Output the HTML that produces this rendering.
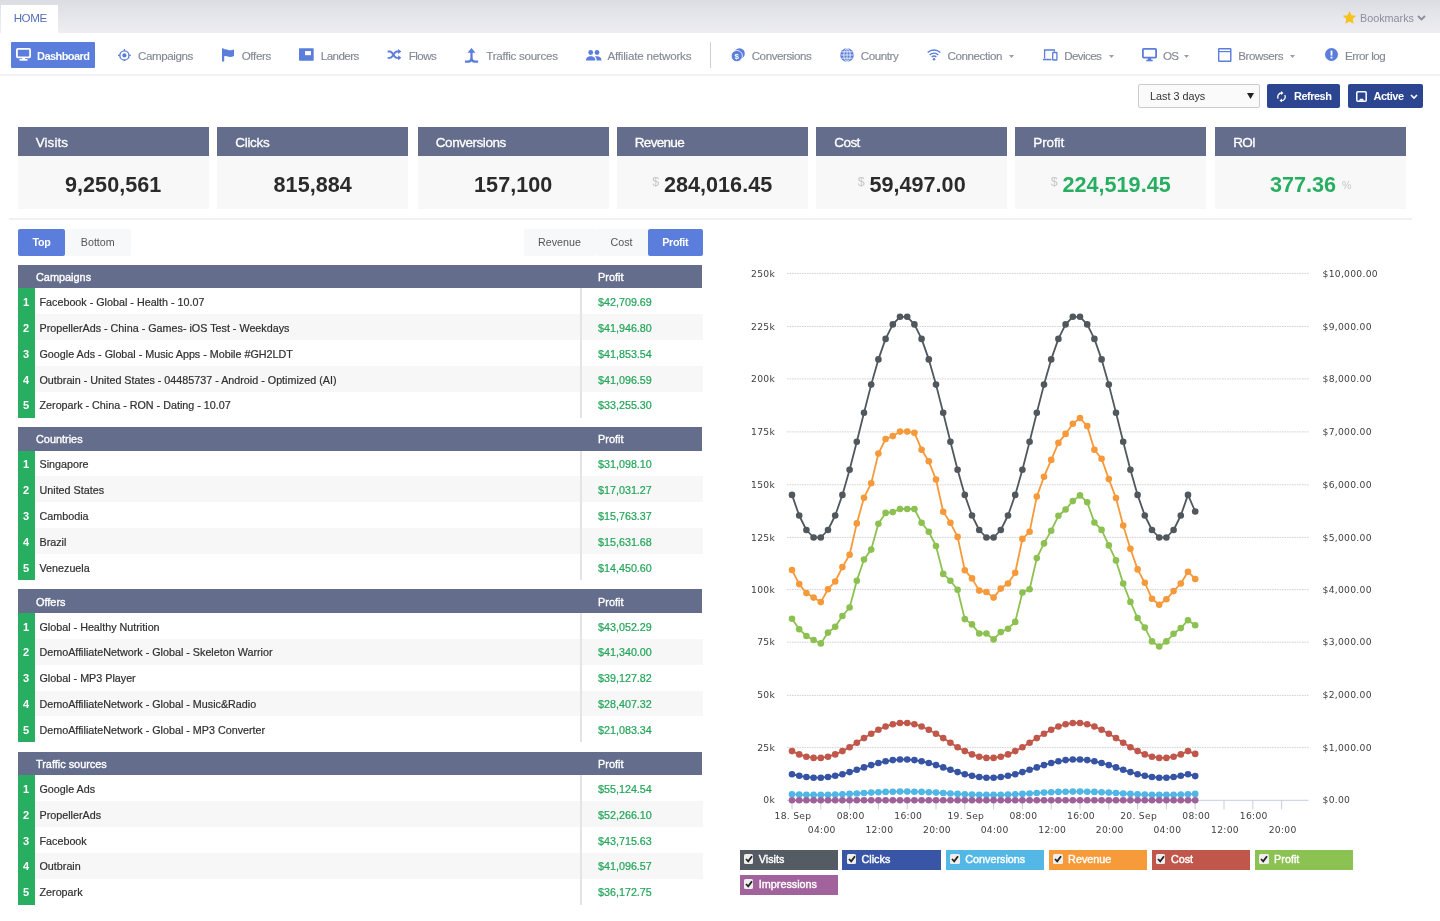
<!DOCTYPE html>
<html lang="en"><head><meta charset="utf-8"><title>Dashboard</title><style>
*{box-sizing:border-box;margin:0;padding:0}
html,body{width:1440px;height:921px;overflow:hidden;background:#fff}
body{font-family:"Liberation Sans",Arial,sans-serif;position:relative;color:#333;filter:blur(0.5px)}
.a{position:absolute;white-space:nowrap}
.t{position:absolute;white-space:nowrap;line-height:1;transform:translateY(-50%)}
.topbar{left:0;top:0;width:1440px;height:32.5px;background:linear-gradient(#dcdde3,#eeeef2)}
.tab{left:1px;top:5px;width:57px;height:28px;background:#fff}
.nav{left:0;top:32.5px;width:1440px;height:43px;background:#fff;border-bottom:2px solid #f1f2f5}
.navt{font-size:11.6px;color:#858995;-webkit-text-stroke:0.15px #858995}
.ico{position:absolute}
.card-h{position:absolute;background:#646d8b;top:127px;height:29px}
.card-b{position:absolute;background:#f8f8f9;top:156px;height:53px}
.card-t{font-size:13.5px;color:#fff;-webkit-text-stroke:0.3px #fff}
.card-n{font-size:21.6px;font-weight:700;color:#2b2b2b;top:184.5px;text-align:center;transform:translate(-50%,-50%)}
.unit{font-size:12.5px;color:#c6c6c6;font-weight:400}
.btn{position:absolute;font-size:11px;text-align:center}
.th{position:absolute;left:17.6px;width:684.9px;height:23.7px;background:#646d8b}
.tht{font-size:10.9px;color:#fff;-webkit-text-stroke:0.35px #fff}
.row{position:absolute;left:34px;width:668.5px;height:25.88px}
.row.alt{background:#f7f7f7}
.idx{position:absolute;left:17.6px;width:17px;height:26px;background:#27ae60}
.idxt{font-size:11px;font-weight:700;color:#fff;left:26.4px;transform:translate(-50%,-50%)}
.rt{font-size:10.75px;color:#303030;left:39.5px;-webkit-text-stroke:0.2px #303030}
.rv{font-size:10.75px;color:#22a558;left:598.5px;-webkit-text-stroke:0.2px #22a558}
.vline{position:absolute;left:580px;width:2px;background:#e4e4e4}
.lg{position:absolute;width:98.5px;height:20px}
.lgt{font-size:10.8px;color:#fff;-webkit-text-stroke:0.4px #fff}
.cb{position:absolute;width:9.5px;height:9.5px;background:#eee;border-radius:1.5px}
.idxt{z-index:2}</style></head><body>
<div class="a topbar"></div>
<div class="a tab"></div>
<div class="t " style="left:13.7px;top:17.8px;font-size:11.6px;letter-spacing:-0.45px;color:#5570b8">HOME</div>
<svg class="ico" style="left:1341.5px;top:10px" width="15" height="15" viewBox="0 0 24 24"><path fill="#f6c21c" d="M12 1.5l3.2 6.9 7.5.9-5.5 5.2 1.4 7.5L12 18.3 5.4 22l1.4-7.5L1.3 9.3l7.5-.9z"/></svg>
<div class="t " style="left:1360px;top:17.9px;font-size:10.8px;color:#8b8f9b">Bookmarks</div>
<svg class="ico" style="left:1416.5px;top:14px" width="9" height="8" viewBox="0 0 9 8"><path d="M1 2l3.5 3.5L8 2" fill="none" stroke="#8b8f9b" stroke-width="1.8"/></svg>
<div class="a nav"></div>
<div class="a" style="left:11px;top:42px;width:84px;height:26px;background:#5b7ddb;border-radius:1px"></div>
<div class="t " style="left:37px;top:55.8px;font-size:11px;color:#fff;font-weight:700;letter-spacing:-0.55px">Dashboard</div>
<svg class="ico" style="left:16px;top:48px" width="15" height="13" viewBox="0 0 15 13"><rect x="0.9" y="0.9" width="13.2" height="8.4" rx="1" fill="none" stroke="#fff" stroke-width="1.8"/><rect x="6" y="9.5" width="3" height="1.6" fill="#fff"/><rect x="3.5" y="11" width="8" height="1.7" fill="#fff"/></svg>
<svg class="ico" style="left:118.2px;top:48.6px" width="12.8" height="12.8" viewBox="0 0 14 14"><circle cx="7" cy="7" r="5" fill="none" stroke="#5b7ddb" stroke-width="1.5"/><circle cx="7" cy="7" r="2.3" fill="#5b7ddb"/><path d="M7 0v1.8M7 12.2V14M0 7h1.8M12.2 7H14" stroke="#5b7ddb" stroke-width="1.4"/></svg>
<div class="t navt" style="left:138px;top:55.8px;letter-spacing:-0.406px;">Campaigns</div>
<svg class="ico" style="left:221px;top:48px" width="14" height="14" viewBox="0 0 14 14"><path fill="#5b7ddb" d="M1 0.5h2.2v13H1z"/><path fill="#5b7ddb" d="M3 1.5c2.5-1 4 .8 6 .8 1.5 0 2.7-.5 4-.9v6.6c-1.3.5-2.5.9-4 .9-2 0-3.500-1.700-6-.7z"/></svg>
<div class="t navt" style="left:241.7px;top:55.8px;letter-spacing:-0.343px;">Offers</div>
<svg class="ico" style="left:299.3px;top:48px" width="14.7" height="13" viewBox="0 0 15 13"><rect x="0" y="0" width="15" height="13" rx="0.8" fill="#5b7ddb"/><rect x="6.200" y="3" width="6" height="4.200" fill="#fff"/></svg>
<div class="t navt" style="left:320.8px;top:55.8px;letter-spacing:-0.572px;">Landers</div>
<svg class="ico" style="left:386.8px;top:49.1px" width="15" height="11.4" viewBox="0 0 15 12.5"><path d="M0 2.800h2.600c3 0 4.400 6.900 7.400 6.900h2.500M0 9.700h2.600c3 0 4.400-6.900 7.400-6.900h2.500" fill="none" stroke="#5b7ddb" stroke-width="2.100"/><path fill="#5b7ddb" d="M11.500 0l3.500 2.800-3.500 2.800zM11.500 6.900l3.500 2.800-3.500 2.800z"/></svg>
<div class="t navt" style="left:408.7px;top:55.8px;letter-spacing:-0.536px;">Flows</div>
<svg class="ico" style="left:464.3px;top:47.6px" width="15" height="15" viewBox="0 0 16 16"><path d="M8 3v8.500M1 14.500h3.300c2.200 0 3.700-1.500 3.700-3.800 0 2.300 1.500 3.800 3.700 3.800h3.300" fill="none" stroke="#5b7ddb" stroke-width="2.400"/><path fill="#5b7ddb" d="M8 0l4.300 5H3.700z"/></svg>
<div class="t navt" style="left:486.3px;top:55.8px;letter-spacing:-0.266px;">Traffic sources</div>
<svg class="ico" style="left:586px;top:50px" width="15.5" height="11" viewBox="0 0 15.5 11"><circle cx="4.700" cy="2.500" r="2.400" fill="#5b7ddb"/><circle cx="11" cy="2.500" r="2.400" fill="#5b7ddb"/><path fill="#5b7ddb" d="M0 10.500c0-3 2.300-4.300 4.700-4.300s4.700 1.300 4.700 4.300zM10.600 10.500c0-1.800-.6-3-1.600-3.900.6-.3 1.300-.4 2-.4 2.400 0 4.500 1.300 4.500 4.300z"/></svg>
<div class="t navt" style="left:607.5px;top:55.8px;letter-spacing:-0.202px;">Affiliate networks</div>
<div class="a" style="left:710.3px;top:42px;width:1.2px;height:26px;background:#d0d0d0"></div>
<svg class="ico" style="left:731px;top:48px" width="14" height="14" viewBox="0 0 14 14"><circle cx="8.500" cy="5.500" r="5.300" fill="#5b7ddb"/><circle cx="5.800" cy="8" r="5.600" fill="#5b7ddb" stroke="#fff" stroke-width="0.800"/><text x="5.800" y="11" font-size="8" font-weight="700" fill="#fff" text-anchor="middle" font-family="Liberation Sans,sans-serif">$</text></svg>
<div class="t navt" style="left:751.7px;top:55.8px;letter-spacing:-0.441px;">Conversions</div>
<svg class="ico" style="left:839.5px;top:48px" width="14" height="14" viewBox="0 0 14 14"><circle cx="7" cy="7" r="6.800" fill="#5b7ddb"/><path d="M7 0.500v13M0.500 7h13M1.500 3.800h11M1.500 10.200h11" stroke="#fff" stroke-width="0.900" fill="none" opacity="0.85"/><ellipse cx="7" cy="7" rx="3.200" ry="6.500" fill="none" stroke="#fff" stroke-width="0.900" opacity="0.85"/></svg>
<div class="t navt" style="left:860.8px;top:55.8px;letter-spacing:-0.444px;">Country</div>
<svg class="ico" style="left:926.5px;top:49px" width="14" height="11.5" viewBox="0 0 14 11.5"><path d="M0.700 3.600a9 9 0 0 1 12.600 0M2.700 5.900a6.100 6.100 0 0 1 8.600 0M4.700 8.100a3.300 3.300 0 0 1 4.600 0" fill="none" stroke="#5b7ddb" stroke-width="1.400"/><circle cx="7" cy="10.300" r="1.200" fill="#5b7ddb"/></svg>
<div class="t navt" style="left:947.5px;top:55.8px;letter-spacing:-0.416px;">Connection</div>
<svg class="ico" style="left:1043px;top:49px" width="14.5" height="12" viewBox="0 0 14.500 12"><path d="M1.600 9.500V1h9.800v1.500" fill="none" stroke="#5b7ddb" stroke-width="1.300"/><rect x="0" y="9.800" width="8.500" height="1.500" fill="#5b7ddb"/><rect x="9.700" y="3.500" width="4.200" height="7.500" rx="0.600" fill="none" stroke="#5b7ddb" stroke-width="1.300"/></svg>
<div class="t navt" style="left:1064.2px;top:55.8px;letter-spacing:-0.593px;">Devices</div>
<svg class="ico" style="left:1142px;top:48px" width="15" height="13.5" viewBox="0 0 15 13.500"><rect x="0.900" y="0.900" width="13.200" height="8.700" rx="0.800" fill="none" stroke="#5b7ddb" stroke-width="1.800"/><rect x="5.800" y="10" width="3.400" height="2" fill="#5b7ddb"/><rect x="4.300" y="11.800" width="6.400" height="1.500" fill="#5b7ddb"/></svg>
<div class="t navt" style="left:1163px;top:55.8px;letter-spacing:-0.800px;">OS</div>
<svg class="ico" style="left:1218px;top:48px" width="13.5" height="14" viewBox="0 0 13.500 14"><rect x="0.700" y="0.700" width="12.100" height="12.600" rx="0.500" fill="none" stroke="#5b7ddb" stroke-width="1.400"/><path d="M0.700 3.600h12.100" stroke="#5b7ddb" stroke-width="1.200"/></svg>
<div class="t navt" style="left:1238.3px;top:55.8px;letter-spacing:-0.454px;">Browsers</div>
<svg class="ico" style="left:1325px;top:48.3px" width="13" height="13" viewBox="0 0 13 13"><circle cx="6.500" cy="6.500" r="6.500" fill="#5b7ddb"/><rect x="5.600" y="2.600" width="1.800" height="5" fill="#fff"/><rect x="5.600" y="8.700" width="1.800" height="1.800" fill="#fff"/></svg>
<div class="t navt" style="left:1345px;top:55.8px;letter-spacing:-0.463px;">Error log</div>
<svg class="ico" style="left:1009.2px;top:55px" width="5" height="3" viewBox="0 0 5 3"><path d="M0 0h5L2.500 3z" fill="#9a9da8"/></svg>
<svg class="ico" style="left:1108.8px;top:55px" width="5" height="3" viewBox="0 0 5 3"><path d="M0 0h5L2.500 3z" fill="#9a9da8"/></svg>
<svg class="ico" style="left:1183.5px;top:55px" width="5" height="3" viewBox="0 0 5 3"><path d="M0 0h5L2.500 3z" fill="#9a9da8"/></svg>
<svg class="ico" style="left:1290.3px;top:55px" width="5" height="3" viewBox="0 0 5 3"><path d="M0 0h5L2.500 3z" fill="#9a9da8"/></svg>
<div class="a" style="left:1138px;top:84px;width:121.500px;height:24px;border:1px solid #c9ccd3;border-radius:2px;background:#fafafb"></div>
<div class="t " style="left:1150px;top:96.2px;font-size:10.8px;color:#333">Last 3 days</div>
<svg class="ico" style="left:1246.500px;top:92.500px" width="7" height="6" viewBox="0 0 7 6"><path d="M0 0h7L3.500 6z" fill="#222"/></svg>
<div class="a" style="left:1267px;top:84px;width:73px;height:24px;background:#2b4590;border-radius:2px"></div>
<svg class="ico" style="left:1275.500px;top:90.500px" width="11" height="11.500" viewBox="0 0 11 11.500"><path d="M5.500 2a3.800 3.800 0 0 0-3.300 5.600M5.500 9.600a3.800 3.800 0 0 0 3.300-5.600" fill="none" stroke="#fff" stroke-width="1.300"/><path d="M5 0l2.500 2L5 4zM6 7.600L3.500 9.600l2.500 2z" fill="#fff"/></svg>
<div class="t " style="left:1294px;top:96.3px;font-size:11px;color:#fff;font-weight:700;letter-spacing:-0.5px">Refresh</div>
<div class="a" style="left:1347.500px;top:84px;width:75.500px;height:24px;background:#2b4590;border-radius:2px"></div>
<svg class="ico" style="left:1355.500px;top:91px" width="11" height="11" viewBox="0 0 11 11"><rect x="0.800" y="0.800" width="9.400" height="9.400" rx="1" fill="none" stroke="#fff" stroke-width="1.500"/><path d="M3 9.800h5l-1-2H4z" fill="#fff"/></svg>
<div class="t " style="left:1373.5px;top:96.3px;font-size:11px;color:#fff;font-weight:700;letter-spacing:-0.5px">Active</div>
<svg class="ico" style="left:1410px;top:94px" width="8" height="6" viewBox="0 0 8 6"><path d="M1 1l3 3 3-3" fill="none" stroke="#fff" stroke-width="1.600"/></svg>
<div class="card-h" style="left:17.5px;width:191.3px"></div>
<div class="card-b" style="left:17.5px;width:191.3px"></div>
<div class="t card-t" style="left:35.8px;top:142.5px;letter-spacing:0.031px;">Visits</div>
<div class="t card-n" style="left:113.15px;">9,250,561</div>
<div class="card-h" style="left:217px;width:191.3px"></div>
<div class="card-b" style="left:217px;width:191.3px"></div>
<div class="t card-t" style="left:235.3px;top:142.5px;letter-spacing:-0.333px;">Clicks</div>
<div class="t card-n" style="left:312.65px;">815,884</div>
<div class="card-h" style="left:417.5px;width:191.3px"></div>
<div class="card-b" style="left:417.5px;width:191.3px"></div>
<div class="t card-t" style="left:435.8px;top:142.5px;letter-spacing:-0.459px;">Conversions</div>
<div class="t card-n" style="left:513.15px;">157,100</div>
<div class="card-h" style="left:616.5px;width:191.3px"></div>
<div class="card-b" style="left:616.5px;width:191.3px"></div>
<div class="t card-t" style="left:634.8px;top:142.5px;letter-spacing:-0.692px;">Revenue</div>
<div class="t card-n" style="left:712.15px;"><span class="unit" style="position:relative;top:-5.5px;margin-right:5px">$</span>284,016.45</div>
<div class="card-h" style="left:816px;width:191.3px"></div>
<div class="card-b" style="left:816px;width:191.3px"></div>
<div class="t card-t" style="left:834.3px;top:142.5px;letter-spacing:-0.566px;">Cost</div>
<div class="t card-n" style="left:911.65px;"><span class="unit" style="position:relative;top:-5.5px;margin-right:5px">$</span>59,497.00</div>
<div class="card-h" style="left:1015px;width:191.3px"></div>
<div class="card-b" style="left:1015px;width:191.3px"></div>
<div class="t card-t" style="left:1033.3px;top:142.5px;letter-spacing:-0.136px;">Profit</div>
<div class="t card-n" style="left:1110.65px;color:#27ae60;"><span class="unit" style="position:relative;top:-5.5px;margin-right:5px">$</span>224,519.45</div>
<div class="card-h" style="left:1215px;width:191.3px"></div>
<div class="card-b" style="left:1215px;width:191.3px"></div>
<div class="t card-t" style="left:1233.3px;top:142.5px;letter-spacing:-0.800px;">ROI</div>
<div class="t card-n" style="left:1310.65px;color:#27ae60;">377.36<span class="unit" style="position:relative;top:-3px;margin-left:6px;font-size:10.5px">%</span></div>
<div class="a" style="left:9px;top:218px;width:1403px;height:2px;background:#f0f1f4"></div>
<div class="a" style="left:18px;top:229px;width:47px;height:26.500px;background:#5b7ddb;border-radius:2px"></div>
<div class="t" style="left:41.5px;top:242.300px;transform:translate(-50%,-50%);font-size:10.7px;color:#fff;font-weight:700;letter-spacing:-0.3px;">Top</div>
<div class="a" style="left:65px;top:229px;width:65.5px;height:26.500px;background:#f7f8fa;border-radius:2px"></div>
<div class="t" style="left:97.75px;top:242.300px;transform:translate(-50%,-50%);font-size:10.7px;color:#555;font-weight:400;">Bottom</div>
<div class="a" style="left:524px;top:229px;width:71px;height:26.500px;background:#f7f8fa;border-radius:2px"></div>
<div class="t" style="left:559.5px;top:242.300px;transform:translate(-50%,-50%);font-size:10.7px;color:#555;font-weight:400;">Revenue</div>
<div class="a" style="left:595px;top:229px;width:53px;height:26.500px;background:#f7f8fa;border-radius:2px"></div>
<div class="t" style="left:621.5px;top:242.300px;transform:translate(-50%,-50%);font-size:10.7px;color:#555;font-weight:400;">Cost</div>
<div class="a" style="left:648px;top:229px;width:54.5px;height:26.500px;background:#5b7ddb;border-radius:2px"></div>
<div class="t" style="left:675.25px;top:242.300px;transform:translate(-50%,-50%);font-size:10.7px;color:#fff;font-weight:700;letter-spacing:-0.3px;">Profit</div>
<div class="th" style="top:264.7px"></div>
<div class="t tht" style="left:36px;top:276.9px;">Campaigns</div>
<div class="t tht" style="left:598px;top:276.9px;">Profit</div>
<div class="row" style="top:288.30px"></div>
<div class="t idxt" style="left:26px;top:301.9px;">1</div>
<div class="t rt" style="left:39.5px;top:301.9px;">Facebook - Global - Health - 10.07</div>
<div class="t rv" style="left:598px;top:301.9px;">$42,709.69</div>
<div class="row alt" style="top:314.18px"></div>
<div class="t idxt" style="left:26px;top:327.78px;">2</div>
<div class="t rt" style="left:39.5px;top:327.78px;">PropellerAds - China - Games- iOS Test - Weekdays</div>
<div class="t rv" style="left:598px;top:327.78px;">$41,946.80</div>
<div class="row" style="top:340.06px"></div>
<div class="t idxt" style="left:26px;top:353.66px;">3</div>
<div class="t rt" style="left:39.5px;top:353.66px;">Google Ads - Global - Music Apps - Mobile #GH2LDT</div>
<div class="t rv" style="left:598px;top:353.66px;">$41,853.54</div>
<div class="row alt" style="top:365.94px"></div>
<div class="t idxt" style="left:26px;top:379.54px;">4</div>
<div class="t rt" style="left:39.5px;top:379.54px;">Outbrain - United States - 04485737 - Android - Optimized (AI)</div>
<div class="t rv" style="left:598px;top:379.54px;">$41,096.59</div>
<div class="row" style="top:391.82px"></div>
<div class="t idxt" style="left:26px;top:405.42px;">5</div>
<div class="t rt" style="left:39.5px;top:405.42px;">Zeropark - China - RON - Dating - 10.07</div>
<div class="t rv" style="left:598px;top:405.42px;">$33,255.30</div>
<div class="idx" style="top:288.3px;height:129.40px"></div>
<div class="vline" style="top:288.3px;height:129.40px"></div>
<div class="th" style="top:427px"></div>
<div class="t tht" style="left:36px;top:439.2px;">Countries</div>
<div class="t tht" style="left:598px;top:439.2px;">Profit</div>
<div class="row" style="top:450.60px"></div>
<div class="t idxt" style="left:26px;top:464.2px;">1</div>
<div class="t rt" style="left:39.5px;top:464.2px;">Singapore</div>
<div class="t rv" style="left:598px;top:464.2px;">$31,098.10</div>
<div class="row alt" style="top:476.48px"></div>
<div class="t idxt" style="left:26px;top:490.08px;">2</div>
<div class="t rt" style="left:39.5px;top:490.08px;">United States</div>
<div class="t rv" style="left:598px;top:490.08px;">$17,031.27</div>
<div class="row" style="top:502.36px"></div>
<div class="t idxt" style="left:26px;top:515.96px;">3</div>
<div class="t rt" style="left:39.5px;top:515.96px;">Cambodia</div>
<div class="t rv" style="left:598px;top:515.96px;">$15,763.37</div>
<div class="row alt" style="top:528.24px"></div>
<div class="t idxt" style="left:26px;top:541.84px;">4</div>
<div class="t rt" style="left:39.5px;top:541.84px;">Brazil</div>
<div class="t rv" style="left:598px;top:541.84px;">$15,631.68</div>
<div class="row" style="top:554.12px"></div>
<div class="t idxt" style="left:26px;top:567.72px;">5</div>
<div class="t rt" style="left:39.5px;top:567.72px;">Venezuela</div>
<div class="t rv" style="left:598px;top:567.72px;">$14,450.60</div>
<div class="idx" style="top:450.6px;height:129.40px"></div>
<div class="vline" style="top:450.6px;height:129.40px"></div>
<div class="th" style="top:589.3px"></div>
<div class="t tht" style="left:36px;top:601.5px;">Offers</div>
<div class="t tht" style="left:598px;top:601.5px;">Profit</div>
<div class="row" style="top:612.90px"></div>
<div class="t idxt" style="left:26px;top:626.5px;">1</div>
<div class="t rt" style="left:39.5px;top:626.5px;">Global - Healthy Nutrition</div>
<div class="t rv" style="left:598px;top:626.5px;">$43,052.29</div>
<div class="row alt" style="top:638.78px"></div>
<div class="t idxt" style="left:26px;top:652.38px;">2</div>
<div class="t rt" style="left:39.5px;top:652.38px;">DemoAffiliateNetwork - Global - Skeleton Warrior</div>
<div class="t rv" style="left:598px;top:652.38px;">$41,340.00</div>
<div class="row" style="top:664.66px"></div>
<div class="t idxt" style="left:26px;top:678.26px;">3</div>
<div class="t rt" style="left:39.5px;top:678.26px;">Global - MP3 Player</div>
<div class="t rv" style="left:598px;top:678.26px;">$39,127.82</div>
<div class="row alt" style="top:690.54px"></div>
<div class="t idxt" style="left:26px;top:704.14px;">4</div>
<div class="t rt" style="left:39.5px;top:704.14px;">DemoAffiliateNetwork - Global - Music&amp;Radio</div>
<div class="t rv" style="left:598px;top:704.14px;">$28,407.32</div>
<div class="row" style="top:716.42px"></div>
<div class="t idxt" style="left:26px;top:730.02px;">5</div>
<div class="t rt" style="left:39.5px;top:730.02px;">DemoAffiliateNetwork - Global - MP3 Converter</div>
<div class="t rv" style="left:598px;top:730.02px;">$21,083.34</div>
<div class="idx" style="top:612.9px;height:129.40px"></div>
<div class="vline" style="top:612.9px;height:129.40px"></div>
<div class="th" style="top:751.6px"></div>
<div class="t tht" style="left:36px;top:763.8000000000001px;">Traffic sources</div>
<div class="t tht" style="left:598px;top:763.8000000000001px;">Profit</div>
<div class="row" style="top:775.20px"></div>
<div class="t idxt" style="left:26px;top:788.8px;">1</div>
<div class="t rt" style="left:39.5px;top:788.8px;">Google Ads</div>
<div class="t rv" style="left:598px;top:788.8px;">$55,124.54</div>
<div class="row alt" style="top:801.08px"></div>
<div class="t idxt" style="left:26px;top:814.68px;">2</div>
<div class="t rt" style="left:39.5px;top:814.68px;">PropellerAds</div>
<div class="t rv" style="left:598px;top:814.68px;">$52,266.10</div>
<div class="row" style="top:826.96px"></div>
<div class="t idxt" style="left:26px;top:840.56px;">3</div>
<div class="t rt" style="left:39.5px;top:840.56px;">Facebook</div>
<div class="t rv" style="left:598px;top:840.56px;">$43,715.63</div>
<div class="row alt" style="top:852.84px"></div>
<div class="t idxt" style="left:26px;top:866.44px;">4</div>
<div class="t rt" style="left:39.5px;top:866.44px;">Outbrain</div>
<div class="t rv" style="left:598px;top:866.44px;">$41,096.57</div>
<div class="row" style="top:878.72px"></div>
<div class="t idxt" style="left:26px;top:892.32px;">5</div>
<div class="t rt" style="left:39.5px;top:892.32px;">Zeropark</div>
<div class="t rv" style="left:598px;top:892.32px;">$36,172.75</div>
<div class="idx" style="top:775.2px;height:129.40px"></div>
<div class="vline" style="top:775.2px;height:129.40px"></div>
<svg class="ico" style="left:0;top:0" width="1440" height="921" viewBox="0 0 1440 921" font-family="DejaVu Sans, Liberation Sans, sans-serif" font-size="9.200" letter-spacing="0.28"><text x="775.100" y="803" text-anchor="end" fill="#404040">0k</text><text x="1322.500" y="803" fill="#404040">$0.00</text><path d="M787 747.4H1308.500" stroke="#cdcdcd" stroke-width="0.9" stroke-dasharray="1.600 0.900" fill="none"/><text x="775.100" y="751" text-anchor="end" fill="#404040">25k</text><text x="1322.500" y="751" fill="#404040">$1,000.00</text><path d="M787 695.4H1308.500" stroke="#cdcdcd" stroke-width="0.9" stroke-dasharray="1.600 0.900" fill="none"/><text x="775.100" y="698" text-anchor="end" fill="#404040">50k</text><text x="1322.500" y="698" fill="#404040">$2,000.00</text><path d="M787 642.2H1308.500" stroke="#cdcdcd" stroke-width="0.9" stroke-dasharray="1.600 0.900" fill="none"/><text x="775.100" y="645" text-anchor="end" fill="#404040">75k</text><text x="1322.500" y="645" fill="#404040">$3,000.00</text><path d="M787 589.6H1308.500" stroke="#cdcdcd" stroke-width="0.9" stroke-dasharray="1.600 0.900" fill="none"/><text x="775.100" y="593" text-anchor="end" fill="#404040">100k</text><text x="1322.500" y="593" fill="#404040">$4,000.00</text><path d="M787 537.4H1308.500" stroke="#cdcdcd" stroke-width="0.9" stroke-dasharray="1.600 0.900" fill="none"/><text x="775.100" y="541" text-anchor="end" fill="#404040">125k</text><text x="1322.500" y="541" fill="#404040">$5,000.00</text><path d="M787 484.8H1308.500" stroke="#cdcdcd" stroke-width="0.9" stroke-dasharray="1.600 0.900" fill="none"/><text x="775.100" y="488" text-anchor="end" fill="#404040">150k</text><text x="1322.500" y="488" fill="#404040">$6,000.00</text><path d="M787 431.9H1308.500" stroke="#cdcdcd" stroke-width="0.9" stroke-dasharray="1.600 0.900" fill="none"/><text x="775.100" y="435" text-anchor="end" fill="#404040">175k</text><text x="1322.500" y="435" fill="#404040">$7,000.00</text><path d="M787 378.9H1308.500" stroke="#cdcdcd" stroke-width="0.9" stroke-dasharray="1.600 0.900" fill="none"/><text x="775.100" y="382" text-anchor="end" fill="#404040">200k</text><text x="1322.500" y="382" fill="#404040">$8,000.00</text><path d="M787 326.5H1308.500" stroke="#cdcdcd" stroke-width="0.9" stroke-dasharray="1.600 0.900" fill="none"/><text x="775.100" y="330" text-anchor="end" fill="#404040">225k</text><text x="1322.500" y="330" fill="#404040">$9,000.00</text><path d="M787 273.4H1308.500" stroke="#cdcdcd" stroke-width="0.9" stroke-dasharray="1.600 0.900" fill="none"/><text x="775.100" y="277" text-anchor="end" fill="#404040">250k</text><text x="1322.500" y="277" fill="#404040">$10,000.00</text><path d="M787 800.3H1308.500" stroke="#c3cde0" stroke-width="1" fill="none"/><path d="M792.0 800.3V809.3" stroke="#c3cde0" stroke-width="1"/><text x="793.0" y="818.6" text-anchor="middle" fill="#404040">18. Sep</text><path d="M820.8 800.3V809.3" stroke="#c3cde0" stroke-width="1"/><text x="821.8" y="833" text-anchor="middle" fill="#404040">04:00</text><path d="M849.6 800.3V809.3" stroke="#c3cde0" stroke-width="1"/><text x="850.6" y="818.6" text-anchor="middle" fill="#404040">08:00</text><path d="M878.4 800.3V809.3" stroke="#c3cde0" stroke-width="1"/><text x="879.4" y="833" text-anchor="middle" fill="#404040">12:00</text><path d="M907.2 800.3V809.3" stroke="#c3cde0" stroke-width="1"/><text x="908.2" y="818.6" text-anchor="middle" fill="#404040">16:00</text><path d="M936.0 800.3V809.3" stroke="#c3cde0" stroke-width="1"/><text x="937.0" y="833" text-anchor="middle" fill="#404040">20:00</text><path d="M964.8 800.3V809.3" stroke="#c3cde0" stroke-width="1"/><text x="965.8" y="818.6" text-anchor="middle" fill="#404040">19. Sep</text><path d="M993.6 800.3V809.3" stroke="#c3cde0" stroke-width="1"/><text x="994.6" y="833" text-anchor="middle" fill="#404040">04:00</text><path d="M1022.4 800.3V809.3" stroke="#c3cde0" stroke-width="1"/><text x="1023.4" y="818.6" text-anchor="middle" fill="#404040">08:00</text><path d="M1051.2 800.3V809.3" stroke="#c3cde0" stroke-width="1"/><text x="1052.2" y="833" text-anchor="middle" fill="#404040">12:00</text><path d="M1080.0 800.3V809.3" stroke="#c3cde0" stroke-width="1"/><text x="1081.0" y="818.6" text-anchor="middle" fill="#404040">16:00</text><path d="M1108.8 800.3V809.3" stroke="#c3cde0" stroke-width="1"/><text x="1109.8" y="833" text-anchor="middle" fill="#404040">20:00</text><path d="M1137.6 800.3V809.3" stroke="#c3cde0" stroke-width="1"/><text x="1138.6" y="818.6" text-anchor="middle" fill="#404040">20. Sep</text><path d="M1166.4 800.3V809.3" stroke="#c3cde0" stroke-width="1"/><text x="1167.4" y="833" text-anchor="middle" fill="#404040">04:00</text><path d="M1195.2 800.3V809.3" stroke="#c3cde0" stroke-width="1"/><text x="1196.2" y="818.6" text-anchor="middle" fill="#404040">08:00</text><path d="M1224.0 800.3V809.3" stroke="#c3cde0" stroke-width="1"/><text x="1225.0" y="833" text-anchor="middle" fill="#404040">12:00</text><path d="M1252.8 800.3V809.3" stroke="#c3cde0" stroke-width="1"/><text x="1253.8" y="818.6" text-anchor="middle" fill="#404040">16:00</text><path d="M1281.6 800.3V809.3" stroke="#c3cde0" stroke-width="1"/><text x="1282.6" y="833" text-anchor="middle" fill="#404040">20:00</text><path d="M792.0 494.9L799.2 515.5L806.4 530.0L813.6 537.5L820.8 537.5L828.0 530.0L835.2 515.5L842.4 494.9L849.6 469.8L856.8 441.7L864.0 412.7L871.2 384.6L878.4 359.4L885.6 338.9L892.8 324.4L900.0 316.8L907.2 316.8L914.4 324.4L921.6 338.9L928.8 359.4L936.0 384.6L943.2 412.7L950.4 441.7L957.6 469.8L964.8 494.9L972.0 515.5L979.2 530.0L986.4 537.5L993.6 537.5L1000.8 530.0L1008.0 515.5L1015.2 494.9L1022.4 469.8L1029.6 441.7L1036.8 412.7L1044.0 384.6L1051.2 359.4L1058.4 338.9L1065.6 324.4L1072.8 316.8L1080.0 316.8L1087.2 324.4L1094.4 338.9L1101.6 359.4L1108.8 384.6L1116.0 412.7L1123.2 441.7L1130.4 469.8L1137.6 494.9L1144.8 515.5L1152.0 530.0L1159.2 537.5L1166.4 537.5L1173.6 530.0L1180.8 515.5L1188.0 494.9L1195.2 511.5" fill="none" stroke="#50585d" stroke-width="1.800" stroke-linejoin="round"/><circle cx="792.0" cy="494.9" r="3.300" fill="#50585d"/><circle cx="799.2" cy="515.5" r="3.300" fill="#50585d"/><circle cx="806.4" cy="530.0" r="3.300" fill="#50585d"/><circle cx="813.6" cy="537.5" r="3.300" fill="#50585d"/><circle cx="820.8" cy="537.5" r="3.300" fill="#50585d"/><circle cx="828.0" cy="530.0" r="3.300" fill="#50585d"/><circle cx="835.2" cy="515.5" r="3.300" fill="#50585d"/><circle cx="842.4" cy="494.9" r="3.300" fill="#50585d"/><circle cx="849.6" cy="469.8" r="3.300" fill="#50585d"/><circle cx="856.8" cy="441.7" r="3.300" fill="#50585d"/><circle cx="864.0" cy="412.7" r="3.300" fill="#50585d"/><circle cx="871.2" cy="384.6" r="3.300" fill="#50585d"/><circle cx="878.4" cy="359.4" r="3.300" fill="#50585d"/><circle cx="885.6" cy="338.9" r="3.300" fill="#50585d"/><circle cx="892.8" cy="324.4" r="3.300" fill="#50585d"/><circle cx="900.0" cy="316.8" r="3.300" fill="#50585d"/><circle cx="907.2" cy="316.8" r="3.300" fill="#50585d"/><circle cx="914.4" cy="324.4" r="3.300" fill="#50585d"/><circle cx="921.6" cy="338.9" r="3.300" fill="#50585d"/><circle cx="928.8" cy="359.4" r="3.300" fill="#50585d"/><circle cx="936.0" cy="384.6" r="3.300" fill="#50585d"/><circle cx="943.2" cy="412.7" r="3.300" fill="#50585d"/><circle cx="950.4" cy="441.7" r="3.300" fill="#50585d"/><circle cx="957.6" cy="469.8" r="3.300" fill="#50585d"/><circle cx="964.8" cy="494.9" r="3.300" fill="#50585d"/><circle cx="972.0" cy="515.5" r="3.300" fill="#50585d"/><circle cx="979.2" cy="530.0" r="3.300" fill="#50585d"/><circle cx="986.4" cy="537.5" r="3.300" fill="#50585d"/><circle cx="993.6" cy="537.5" r="3.300" fill="#50585d"/><circle cx="1000.8" cy="530.0" r="3.300" fill="#50585d"/><circle cx="1008.0" cy="515.5" r="3.300" fill="#50585d"/><circle cx="1015.2" cy="494.9" r="3.300" fill="#50585d"/><circle cx="1022.4" cy="469.8" r="3.300" fill="#50585d"/><circle cx="1029.6" cy="441.7" r="3.300" fill="#50585d"/><circle cx="1036.8" cy="412.7" r="3.300" fill="#50585d"/><circle cx="1044.0" cy="384.6" r="3.300" fill="#50585d"/><circle cx="1051.2" cy="359.4" r="3.300" fill="#50585d"/><circle cx="1058.4" cy="338.9" r="3.300" fill="#50585d"/><circle cx="1065.6" cy="324.4" r="3.300" fill="#50585d"/><circle cx="1072.8" cy="316.8" r="3.300" fill="#50585d"/><circle cx="1080.0" cy="316.8" r="3.300" fill="#50585d"/><circle cx="1087.2" cy="324.4" r="3.300" fill="#50585d"/><circle cx="1094.4" cy="338.9" r="3.300" fill="#50585d"/><circle cx="1101.6" cy="359.4" r="3.300" fill="#50585d"/><circle cx="1108.8" cy="384.6" r="3.300" fill="#50585d"/><circle cx="1116.0" cy="412.7" r="3.300" fill="#50585d"/><circle cx="1123.2" cy="441.7" r="3.300" fill="#50585d"/><circle cx="1130.4" cy="469.8" r="3.300" fill="#50585d"/><circle cx="1137.6" cy="494.9" r="3.300" fill="#50585d"/><circle cx="1144.8" cy="515.5" r="3.300" fill="#50585d"/><circle cx="1152.0" cy="530.0" r="3.300" fill="#50585d"/><circle cx="1159.2" cy="537.5" r="3.300" fill="#50585d"/><circle cx="1166.4" cy="537.5" r="3.300" fill="#50585d"/><circle cx="1173.6" cy="530.0" r="3.300" fill="#50585d"/><circle cx="1180.8" cy="515.5" r="3.300" fill="#50585d"/><circle cx="1188.0" cy="494.9" r="3.300" fill="#50585d"/><circle cx="1195.2" cy="511.5" r="3.300" fill="#50585d"/><path d="M792.0 774.2L799.2 775.8L806.4 777.0L813.6 777.7L820.8 777.7L828.0 777.0L835.2 775.8L842.4 774.2L849.6 772.1L856.8 769.8L864.0 767.4L871.2 765.1L878.4 763.0L885.6 761.3L892.8 760.1L900.0 759.5L907.2 759.5L914.4 760.1L921.6 761.3L928.8 763.0L936.0 765.1L943.2 767.4L950.4 769.8L957.6 772.1L964.8 774.2L972.0 775.8L979.2 777.0L986.4 777.7L993.6 777.7L1000.8 777.0L1008.0 775.8L1015.2 774.2L1022.4 772.1L1029.6 769.8L1036.8 767.4L1044.0 765.1L1051.2 763.0L1058.4 761.3L1065.6 760.1L1072.8 759.5L1080.0 759.5L1087.2 760.1L1094.4 761.3L1101.6 763.0L1108.8 765.1L1116.0 767.4L1123.2 769.8L1130.4 772.1L1137.6 774.2L1144.8 775.8L1152.0 777.0L1159.2 777.7L1166.4 777.7L1173.6 777.0L1180.8 775.8L1188.0 774.2L1195.2 776.1" fill="none" stroke="#3653a4" stroke-width="1.800" stroke-linejoin="round"/><circle cx="792.0" cy="774.2" r="3.300" fill="#3653a4"/><circle cx="799.2" cy="775.8" r="3.300" fill="#3653a4"/><circle cx="806.4" cy="777.0" r="3.300" fill="#3653a4"/><circle cx="813.6" cy="777.7" r="3.300" fill="#3653a4"/><circle cx="820.8" cy="777.7" r="3.300" fill="#3653a4"/><circle cx="828.0" cy="777.0" r="3.300" fill="#3653a4"/><circle cx="835.2" cy="775.8" r="3.300" fill="#3653a4"/><circle cx="842.4" cy="774.2" r="3.300" fill="#3653a4"/><circle cx="849.6" cy="772.1" r="3.300" fill="#3653a4"/><circle cx="856.8" cy="769.8" r="3.300" fill="#3653a4"/><circle cx="864.0" cy="767.4" r="3.300" fill="#3653a4"/><circle cx="871.2" cy="765.1" r="3.300" fill="#3653a4"/><circle cx="878.4" cy="763.0" r="3.300" fill="#3653a4"/><circle cx="885.6" cy="761.3" r="3.300" fill="#3653a4"/><circle cx="892.8" cy="760.1" r="3.300" fill="#3653a4"/><circle cx="900.0" cy="759.5" r="3.300" fill="#3653a4"/><circle cx="907.2" cy="759.5" r="3.300" fill="#3653a4"/><circle cx="914.4" cy="760.1" r="3.300" fill="#3653a4"/><circle cx="921.6" cy="761.3" r="3.300" fill="#3653a4"/><circle cx="928.8" cy="763.0" r="3.300" fill="#3653a4"/><circle cx="936.0" cy="765.1" r="3.300" fill="#3653a4"/><circle cx="943.2" cy="767.4" r="3.300" fill="#3653a4"/><circle cx="950.4" cy="769.8" r="3.300" fill="#3653a4"/><circle cx="957.6" cy="772.1" r="3.300" fill="#3653a4"/><circle cx="964.8" cy="774.2" r="3.300" fill="#3653a4"/><circle cx="972.0" cy="775.8" r="3.300" fill="#3653a4"/><circle cx="979.2" cy="777.0" r="3.300" fill="#3653a4"/><circle cx="986.4" cy="777.7" r="3.300" fill="#3653a4"/><circle cx="993.6" cy="777.7" r="3.300" fill="#3653a4"/><circle cx="1000.8" cy="777.0" r="3.300" fill="#3653a4"/><circle cx="1008.0" cy="775.8" r="3.300" fill="#3653a4"/><circle cx="1015.2" cy="774.2" r="3.300" fill="#3653a4"/><circle cx="1022.4" cy="772.1" r="3.300" fill="#3653a4"/><circle cx="1029.6" cy="769.8" r="3.300" fill="#3653a4"/><circle cx="1036.8" cy="767.4" r="3.300" fill="#3653a4"/><circle cx="1044.0" cy="765.1" r="3.300" fill="#3653a4"/><circle cx="1051.2" cy="763.0" r="3.300" fill="#3653a4"/><circle cx="1058.4" cy="761.3" r="3.300" fill="#3653a4"/><circle cx="1065.6" cy="760.1" r="3.300" fill="#3653a4"/><circle cx="1072.8" cy="759.5" r="3.300" fill="#3653a4"/><circle cx="1080.0" cy="759.5" r="3.300" fill="#3653a4"/><circle cx="1087.2" cy="760.1" r="3.300" fill="#3653a4"/><circle cx="1094.4" cy="761.3" r="3.300" fill="#3653a4"/><circle cx="1101.6" cy="763.0" r="3.300" fill="#3653a4"/><circle cx="1108.8" cy="765.1" r="3.300" fill="#3653a4"/><circle cx="1116.0" cy="767.4" r="3.300" fill="#3653a4"/><circle cx="1123.2" cy="769.8" r="3.300" fill="#3653a4"/><circle cx="1130.4" cy="772.1" r="3.300" fill="#3653a4"/><circle cx="1137.6" cy="774.2" r="3.300" fill="#3653a4"/><circle cx="1144.8" cy="775.8" r="3.300" fill="#3653a4"/><circle cx="1152.0" cy="777.0" r="3.300" fill="#3653a4"/><circle cx="1159.2" cy="777.7" r="3.300" fill="#3653a4"/><circle cx="1166.4" cy="777.7" r="3.300" fill="#3653a4"/><circle cx="1173.6" cy="777.0" r="3.300" fill="#3653a4"/><circle cx="1180.8" cy="775.8" r="3.300" fill="#3653a4"/><circle cx="1188.0" cy="774.2" r="3.300" fill="#3653a4"/><circle cx="1195.2" cy="776.1" r="3.300" fill="#3653a4"/><path d="M792.0 794.3L799.2 794.6L806.4 794.8L813.6 794.9L820.8 794.9L828.0 794.8L835.2 794.6L842.4 794.3L849.6 793.9L856.8 793.5L864.0 793.0L871.2 792.6L878.4 792.2L885.6 791.9L892.8 791.7L900.0 791.6L907.2 791.6L914.4 791.7L921.6 791.9L928.8 792.2L936.0 792.6L943.2 793.0L950.4 793.5L957.6 793.9L964.8 794.3L972.0 794.6L979.2 794.8L986.4 794.9L993.6 794.9L1000.8 794.8L1008.0 794.6L1015.2 794.3L1022.4 793.9L1029.6 793.5L1036.8 793.0L1044.0 792.6L1051.2 792.2L1058.4 791.9L1065.6 791.7L1072.8 791.6L1080.0 791.6L1087.2 791.7L1094.4 791.9L1101.6 792.2L1108.8 792.6L1116.0 793.0L1123.2 793.5L1130.4 793.9L1137.6 794.3L1144.8 794.6L1152.0 794.8L1159.2 794.9L1166.4 794.9L1173.6 794.8L1180.8 794.6L1188.0 794.3L1195.2 793.9" fill="none" stroke="#4fb6e6" stroke-width="1.800" stroke-linejoin="round"/><circle cx="792.0" cy="794.3" r="3.300" fill="#4fb6e6"/><circle cx="799.2" cy="794.6" r="3.300" fill="#4fb6e6"/><circle cx="806.4" cy="794.8" r="3.300" fill="#4fb6e6"/><circle cx="813.6" cy="794.9" r="3.300" fill="#4fb6e6"/><circle cx="820.8" cy="794.9" r="3.300" fill="#4fb6e6"/><circle cx="828.0" cy="794.8" r="3.300" fill="#4fb6e6"/><circle cx="835.2" cy="794.6" r="3.300" fill="#4fb6e6"/><circle cx="842.4" cy="794.3" r="3.300" fill="#4fb6e6"/><circle cx="849.6" cy="793.9" r="3.300" fill="#4fb6e6"/><circle cx="856.8" cy="793.5" r="3.300" fill="#4fb6e6"/><circle cx="864.0" cy="793.0" r="3.300" fill="#4fb6e6"/><circle cx="871.2" cy="792.6" r="3.300" fill="#4fb6e6"/><circle cx="878.4" cy="792.2" r="3.300" fill="#4fb6e6"/><circle cx="885.6" cy="791.9" r="3.300" fill="#4fb6e6"/><circle cx="892.8" cy="791.7" r="3.300" fill="#4fb6e6"/><circle cx="900.0" cy="791.6" r="3.300" fill="#4fb6e6"/><circle cx="907.2" cy="791.6" r="3.300" fill="#4fb6e6"/><circle cx="914.4" cy="791.7" r="3.300" fill="#4fb6e6"/><circle cx="921.6" cy="791.9" r="3.300" fill="#4fb6e6"/><circle cx="928.8" cy="792.2" r="3.300" fill="#4fb6e6"/><circle cx="936.0" cy="792.6" r="3.300" fill="#4fb6e6"/><circle cx="943.2" cy="793.0" r="3.300" fill="#4fb6e6"/><circle cx="950.4" cy="793.5" r="3.300" fill="#4fb6e6"/><circle cx="957.6" cy="793.9" r="3.300" fill="#4fb6e6"/><circle cx="964.8" cy="794.3" r="3.300" fill="#4fb6e6"/><circle cx="972.0" cy="794.6" r="3.300" fill="#4fb6e6"/><circle cx="979.2" cy="794.8" r="3.300" fill="#4fb6e6"/><circle cx="986.4" cy="794.9" r="3.300" fill="#4fb6e6"/><circle cx="993.6" cy="794.9" r="3.300" fill="#4fb6e6"/><circle cx="1000.8" cy="794.8" r="3.300" fill="#4fb6e6"/><circle cx="1008.0" cy="794.6" r="3.300" fill="#4fb6e6"/><circle cx="1015.2" cy="794.3" r="3.300" fill="#4fb6e6"/><circle cx="1022.4" cy="793.9" r="3.300" fill="#4fb6e6"/><circle cx="1029.6" cy="793.5" r="3.300" fill="#4fb6e6"/><circle cx="1036.8" cy="793.0" r="3.300" fill="#4fb6e6"/><circle cx="1044.0" cy="792.6" r="3.300" fill="#4fb6e6"/><circle cx="1051.2" cy="792.2" r="3.300" fill="#4fb6e6"/><circle cx="1058.4" cy="791.9" r="3.300" fill="#4fb6e6"/><circle cx="1065.6" cy="791.7" r="3.300" fill="#4fb6e6"/><circle cx="1072.8" cy="791.6" r="3.300" fill="#4fb6e6"/><circle cx="1080.0" cy="791.6" r="3.300" fill="#4fb6e6"/><circle cx="1087.2" cy="791.7" r="3.300" fill="#4fb6e6"/><circle cx="1094.4" cy="791.9" r="3.300" fill="#4fb6e6"/><circle cx="1101.6" cy="792.2" r="3.300" fill="#4fb6e6"/><circle cx="1108.8" cy="792.6" r="3.300" fill="#4fb6e6"/><circle cx="1116.0" cy="793.0" r="3.300" fill="#4fb6e6"/><circle cx="1123.2" cy="793.5" r="3.300" fill="#4fb6e6"/><circle cx="1130.4" cy="793.9" r="3.300" fill="#4fb6e6"/><circle cx="1137.6" cy="794.3" r="3.300" fill="#4fb6e6"/><circle cx="1144.8" cy="794.6" r="3.300" fill="#4fb6e6"/><circle cx="1152.0" cy="794.8" r="3.300" fill="#4fb6e6"/><circle cx="1159.2" cy="794.9" r="3.300" fill="#4fb6e6"/><circle cx="1166.4" cy="794.9" r="3.300" fill="#4fb6e6"/><circle cx="1173.6" cy="794.8" r="3.300" fill="#4fb6e6"/><circle cx="1180.8" cy="794.6" r="3.300" fill="#4fb6e6"/><circle cx="1188.0" cy="794.3" r="3.300" fill="#4fb6e6"/><circle cx="1195.2" cy="793.9" r="3.300" fill="#4fb6e6"/><path d="M792.0 570.0L799.2 584.1L806.4 593.1L813.6 597.6L820.8 602.1L828.0 589.2L835.2 581.5L842.4 567.1L849.6 554.7L856.8 523.4L864.0 497.7L871.2 483.3L878.4 453.6L885.6 439.0L892.8 436.1L900.0 431.6L907.2 431.6L914.4 432.7L921.6 449.7L928.8 461.3L936.0 479.6L943.2 511.8L950.4 522.8L957.6 536.9L964.8 570.2L972.0 578.4L979.2 590.6L986.4 592.0L993.6 597.6L1000.8 588.6L1008.0 583.5L1015.2 572.8L1022.4 538.9L1029.6 531.8L1036.8 496.6L1044.0 476.8L1051.2 459.9L1058.4 442.9L1065.6 433.9L1072.8 423.7L1080.0 418.1L1087.2 426.0L1094.4 449.7L1101.6 458.7L1108.8 479.1L1116.0 498.0L1123.2 525.6L1130.4 548.8L1137.6 569.4L1144.8 582.7L1152.0 598.8L1159.2 604.7L1166.4 599.3L1173.6 591.1L1180.8 583.5L1188.0 571.7L1195.2 579.0" fill="none" stroke="#f6993a" stroke-width="1.800" stroke-linejoin="round"/><circle cx="792.0" cy="570.0" r="3.300" fill="#f6993a"/><circle cx="799.2" cy="584.1" r="3.300" fill="#f6993a"/><circle cx="806.4" cy="593.1" r="3.300" fill="#f6993a"/><circle cx="813.6" cy="597.6" r="3.300" fill="#f6993a"/><circle cx="820.8" cy="602.1" r="3.300" fill="#f6993a"/><circle cx="828.0" cy="589.2" r="3.300" fill="#f6993a"/><circle cx="835.2" cy="581.5" r="3.300" fill="#f6993a"/><circle cx="842.4" cy="567.1" r="3.300" fill="#f6993a"/><circle cx="849.6" cy="554.7" r="3.300" fill="#f6993a"/><circle cx="856.8" cy="523.4" r="3.300" fill="#f6993a"/><circle cx="864.0" cy="497.7" r="3.300" fill="#f6993a"/><circle cx="871.2" cy="483.3" r="3.300" fill="#f6993a"/><circle cx="878.4" cy="453.6" r="3.300" fill="#f6993a"/><circle cx="885.6" cy="439.0" r="3.300" fill="#f6993a"/><circle cx="892.8" cy="436.1" r="3.300" fill="#f6993a"/><circle cx="900.0" cy="431.6" r="3.300" fill="#f6993a"/><circle cx="907.2" cy="431.6" r="3.300" fill="#f6993a"/><circle cx="914.4" cy="432.7" r="3.300" fill="#f6993a"/><circle cx="921.6" cy="449.7" r="3.300" fill="#f6993a"/><circle cx="928.8" cy="461.3" r="3.300" fill="#f6993a"/><circle cx="936.0" cy="479.6" r="3.300" fill="#f6993a"/><circle cx="943.2" cy="511.8" r="3.300" fill="#f6993a"/><circle cx="950.4" cy="522.8" r="3.300" fill="#f6993a"/><circle cx="957.6" cy="536.9" r="3.300" fill="#f6993a"/><circle cx="964.8" cy="570.2" r="3.300" fill="#f6993a"/><circle cx="972.0" cy="578.4" r="3.300" fill="#f6993a"/><circle cx="979.2" cy="590.6" r="3.300" fill="#f6993a"/><circle cx="986.4" cy="592.0" r="3.300" fill="#f6993a"/><circle cx="993.6" cy="597.6" r="3.300" fill="#f6993a"/><circle cx="1000.8" cy="588.6" r="3.300" fill="#f6993a"/><circle cx="1008.0" cy="583.5" r="3.300" fill="#f6993a"/><circle cx="1015.2" cy="572.8" r="3.300" fill="#f6993a"/><circle cx="1022.4" cy="538.9" r="3.300" fill="#f6993a"/><circle cx="1029.6" cy="531.8" r="3.300" fill="#f6993a"/><circle cx="1036.8" cy="496.6" r="3.300" fill="#f6993a"/><circle cx="1044.0" cy="476.8" r="3.300" fill="#f6993a"/><circle cx="1051.2" cy="459.9" r="3.300" fill="#f6993a"/><circle cx="1058.4" cy="442.9" r="3.300" fill="#f6993a"/><circle cx="1065.6" cy="433.9" r="3.300" fill="#f6993a"/><circle cx="1072.8" cy="423.7" r="3.300" fill="#f6993a"/><circle cx="1080.0" cy="418.1" r="3.300" fill="#f6993a"/><circle cx="1087.2" cy="426.0" r="3.300" fill="#f6993a"/><circle cx="1094.4" cy="449.7" r="3.300" fill="#f6993a"/><circle cx="1101.6" cy="458.7" r="3.300" fill="#f6993a"/><circle cx="1108.8" cy="479.1" r="3.300" fill="#f6993a"/><circle cx="1116.0" cy="498.0" r="3.300" fill="#f6993a"/><circle cx="1123.2" cy="525.6" r="3.300" fill="#f6993a"/><circle cx="1130.4" cy="548.8" r="3.300" fill="#f6993a"/><circle cx="1137.6" cy="569.4" r="3.300" fill="#f6993a"/><circle cx="1144.8" cy="582.7" r="3.300" fill="#f6993a"/><circle cx="1152.0" cy="598.8" r="3.300" fill="#f6993a"/><circle cx="1159.2" cy="604.7" r="3.300" fill="#f6993a"/><circle cx="1166.4" cy="599.3" r="3.300" fill="#f6993a"/><circle cx="1173.6" cy="591.1" r="3.300" fill="#f6993a"/><circle cx="1180.8" cy="583.5" r="3.300" fill="#f6993a"/><circle cx="1188.0" cy="571.7" r="3.300" fill="#f6993a"/><circle cx="1195.2" cy="579.0" r="3.300" fill="#f6993a"/><path d="M792.0 751.1L799.2 754.4L806.4 756.7L813.6 757.9L820.8 757.9L828.0 756.7L835.2 754.4L842.4 751.1L849.6 747.2L856.8 742.7L864.0 738.1L871.2 733.7L878.4 729.7L885.6 726.5L892.8 724.2L900.0 723.0L907.2 723.0L914.4 724.2L921.6 726.5L928.8 729.7L936.0 733.7L943.2 738.1L950.4 742.7L957.6 747.2L964.8 751.1L972.0 754.4L979.2 756.7L986.4 757.9L993.6 757.9L1000.8 756.7L1008.0 754.4L1015.2 751.1L1022.4 747.2L1029.6 742.7L1036.8 738.1L1044.0 733.7L1051.2 729.7L1058.4 726.5L1065.6 724.2L1072.8 723.0L1080.0 723.0L1087.2 724.2L1094.4 726.5L1101.6 729.7L1108.8 733.7L1116.0 738.1L1123.2 742.7L1130.4 747.2L1137.6 751.1L1144.8 754.4L1152.0 756.7L1159.2 757.9L1166.4 757.9L1173.6 756.7L1180.8 754.4L1188.0 751.1L1195.2 753.9" fill="none" stroke="#c0574a" stroke-width="1.800" stroke-linejoin="round"/><circle cx="792.0" cy="751.1" r="3.300" fill="#c0574a"/><circle cx="799.2" cy="754.4" r="3.300" fill="#c0574a"/><circle cx="806.4" cy="756.7" r="3.300" fill="#c0574a"/><circle cx="813.6" cy="757.9" r="3.300" fill="#c0574a"/><circle cx="820.8" cy="757.9" r="3.300" fill="#c0574a"/><circle cx="828.0" cy="756.7" r="3.300" fill="#c0574a"/><circle cx="835.2" cy="754.4" r="3.300" fill="#c0574a"/><circle cx="842.4" cy="751.1" r="3.300" fill="#c0574a"/><circle cx="849.6" cy="747.2" r="3.300" fill="#c0574a"/><circle cx="856.8" cy="742.7" r="3.300" fill="#c0574a"/><circle cx="864.0" cy="738.1" r="3.300" fill="#c0574a"/><circle cx="871.2" cy="733.7" r="3.300" fill="#c0574a"/><circle cx="878.4" cy="729.7" r="3.300" fill="#c0574a"/><circle cx="885.6" cy="726.5" r="3.300" fill="#c0574a"/><circle cx="892.8" cy="724.2" r="3.300" fill="#c0574a"/><circle cx="900.0" cy="723.0" r="3.300" fill="#c0574a"/><circle cx="907.2" cy="723.0" r="3.300" fill="#c0574a"/><circle cx="914.4" cy="724.2" r="3.300" fill="#c0574a"/><circle cx="921.6" cy="726.5" r="3.300" fill="#c0574a"/><circle cx="928.8" cy="729.7" r="3.300" fill="#c0574a"/><circle cx="936.0" cy="733.7" r="3.300" fill="#c0574a"/><circle cx="943.2" cy="738.1" r="3.300" fill="#c0574a"/><circle cx="950.4" cy="742.7" r="3.300" fill="#c0574a"/><circle cx="957.6" cy="747.2" r="3.300" fill="#c0574a"/><circle cx="964.8" cy="751.1" r="3.300" fill="#c0574a"/><circle cx="972.0" cy="754.4" r="3.300" fill="#c0574a"/><circle cx="979.2" cy="756.7" r="3.300" fill="#c0574a"/><circle cx="986.4" cy="757.9" r="3.300" fill="#c0574a"/><circle cx="993.6" cy="757.9" r="3.300" fill="#c0574a"/><circle cx="1000.8" cy="756.7" r="3.300" fill="#c0574a"/><circle cx="1008.0" cy="754.4" r="3.300" fill="#c0574a"/><circle cx="1015.2" cy="751.1" r="3.300" fill="#c0574a"/><circle cx="1022.4" cy="747.2" r="3.300" fill="#c0574a"/><circle cx="1029.6" cy="742.7" r="3.300" fill="#c0574a"/><circle cx="1036.8" cy="738.1" r="3.300" fill="#c0574a"/><circle cx="1044.0" cy="733.7" r="3.300" fill="#c0574a"/><circle cx="1051.2" cy="729.7" r="3.300" fill="#c0574a"/><circle cx="1058.4" cy="726.5" r="3.300" fill="#c0574a"/><circle cx="1065.6" cy="724.2" r="3.300" fill="#c0574a"/><circle cx="1072.8" cy="723.0" r="3.300" fill="#c0574a"/><circle cx="1080.0" cy="723.0" r="3.300" fill="#c0574a"/><circle cx="1087.2" cy="724.2" r="3.300" fill="#c0574a"/><circle cx="1094.4" cy="726.5" r="3.300" fill="#c0574a"/><circle cx="1101.6" cy="729.7" r="3.300" fill="#c0574a"/><circle cx="1108.8" cy="733.7" r="3.300" fill="#c0574a"/><circle cx="1116.0" cy="738.1" r="3.300" fill="#c0574a"/><circle cx="1123.2" cy="742.7" r="3.300" fill="#c0574a"/><circle cx="1130.4" cy="747.2" r="3.300" fill="#c0574a"/><circle cx="1137.6" cy="751.1" r="3.300" fill="#c0574a"/><circle cx="1144.8" cy="754.4" r="3.300" fill="#c0574a"/><circle cx="1152.0" cy="756.7" r="3.300" fill="#c0574a"/><circle cx="1159.2" cy="757.9" r="3.300" fill="#c0574a"/><circle cx="1166.4" cy="757.9" r="3.300" fill="#c0574a"/><circle cx="1173.6" cy="756.7" r="3.300" fill="#c0574a"/><circle cx="1180.8" cy="754.4" r="3.300" fill="#c0574a"/><circle cx="1188.0" cy="751.1" r="3.300" fill="#c0574a"/><circle cx="1195.2" cy="753.9" r="3.300" fill="#c0574a"/><path d="M792.0 618.8L799.2 629.2L806.4 636.0L813.6 640.0L820.8 643.4L828.0 632.6L835.2 626.7L842.4 616.0L849.6 607.5L856.8 580.7L864.0 559.5L871.2 549.6L878.4 523.7L885.6 512.9L892.8 512.1L900.0 509.0L907.2 509.0L914.4 509.0L921.6 522.8L928.8 531.8L936.0 546.0L943.2 573.9L950.4 580.7L957.6 589.7L964.8 619.1L972.0 624.4L979.2 633.5L986.4 633.5L993.6 639.4L1000.8 632.1L1008.0 628.7L1015.2 621.9L1022.4 592.5L1029.6 589.2L1036.8 558.1L1044.0 543.4L1051.2 530.7L1058.4 515.8L1065.6 509.5L1072.8 501.1L1080.0 495.4L1087.2 502.2L1094.4 522.5L1101.6 529.9L1108.8 545.4L1116.0 560.4L1123.2 583.5L1130.4 601.9L1137.6 618.0L1144.8 627.6L1152.0 641.4L1159.2 646.5L1166.4 641.4L1173.6 633.8L1180.8 628.1L1188.0 620.2L1195.2 625.3" fill="none" stroke="#8cc152" stroke-width="1.800" stroke-linejoin="round"/><circle cx="792.0" cy="618.8" r="3.300" fill="#8cc152"/><circle cx="799.2" cy="629.2" r="3.300" fill="#8cc152"/><circle cx="806.4" cy="636.0" r="3.300" fill="#8cc152"/><circle cx="813.6" cy="640.0" r="3.300" fill="#8cc152"/><circle cx="820.8" cy="643.4" r="3.300" fill="#8cc152"/><circle cx="828.0" cy="632.6" r="3.300" fill="#8cc152"/><circle cx="835.2" cy="626.7" r="3.300" fill="#8cc152"/><circle cx="842.4" cy="616.0" r="3.300" fill="#8cc152"/><circle cx="849.6" cy="607.5" r="3.300" fill="#8cc152"/><circle cx="856.8" cy="580.7" r="3.300" fill="#8cc152"/><circle cx="864.0" cy="559.5" r="3.300" fill="#8cc152"/><circle cx="871.2" cy="549.6" r="3.300" fill="#8cc152"/><circle cx="878.4" cy="523.7" r="3.300" fill="#8cc152"/><circle cx="885.6" cy="512.9" r="3.300" fill="#8cc152"/><circle cx="892.8" cy="512.1" r="3.300" fill="#8cc152"/><circle cx="900.0" cy="509.0" r="3.300" fill="#8cc152"/><circle cx="907.2" cy="509.0" r="3.300" fill="#8cc152"/><circle cx="914.4" cy="509.0" r="3.300" fill="#8cc152"/><circle cx="921.6" cy="522.8" r="3.300" fill="#8cc152"/><circle cx="928.8" cy="531.8" r="3.300" fill="#8cc152"/><circle cx="936.0" cy="546.0" r="3.300" fill="#8cc152"/><circle cx="943.2" cy="573.9" r="3.300" fill="#8cc152"/><circle cx="950.4" cy="580.7" r="3.300" fill="#8cc152"/><circle cx="957.6" cy="589.7" r="3.300" fill="#8cc152"/><circle cx="964.8" cy="619.1" r="3.300" fill="#8cc152"/><circle cx="972.0" cy="624.4" r="3.300" fill="#8cc152"/><circle cx="979.2" cy="633.5" r="3.300" fill="#8cc152"/><circle cx="986.4" cy="633.5" r="3.300" fill="#8cc152"/><circle cx="993.6" cy="639.4" r="3.300" fill="#8cc152"/><circle cx="1000.8" cy="632.1" r="3.300" fill="#8cc152"/><circle cx="1008.0" cy="628.7" r="3.300" fill="#8cc152"/><circle cx="1015.2" cy="621.9" r="3.300" fill="#8cc152"/><circle cx="1022.4" cy="592.5" r="3.300" fill="#8cc152"/><circle cx="1029.6" cy="589.2" r="3.300" fill="#8cc152"/><circle cx="1036.8" cy="558.1" r="3.300" fill="#8cc152"/><circle cx="1044.0" cy="543.4" r="3.300" fill="#8cc152"/><circle cx="1051.2" cy="530.7" r="3.300" fill="#8cc152"/><circle cx="1058.4" cy="515.8" r="3.300" fill="#8cc152"/><circle cx="1065.6" cy="509.5" r="3.300" fill="#8cc152"/><circle cx="1072.8" cy="501.1" r="3.300" fill="#8cc152"/><circle cx="1080.0" cy="495.4" r="3.300" fill="#8cc152"/><circle cx="1087.2" cy="502.2" r="3.300" fill="#8cc152"/><circle cx="1094.4" cy="522.5" r="3.300" fill="#8cc152"/><circle cx="1101.6" cy="529.9" r="3.300" fill="#8cc152"/><circle cx="1108.8" cy="545.4" r="3.300" fill="#8cc152"/><circle cx="1116.0" cy="560.4" r="3.300" fill="#8cc152"/><circle cx="1123.2" cy="583.5" r="3.300" fill="#8cc152"/><circle cx="1130.4" cy="601.9" r="3.300" fill="#8cc152"/><circle cx="1137.6" cy="618.0" r="3.300" fill="#8cc152"/><circle cx="1144.8" cy="627.6" r="3.300" fill="#8cc152"/><circle cx="1152.0" cy="641.4" r="3.300" fill="#8cc152"/><circle cx="1159.2" cy="646.5" r="3.300" fill="#8cc152"/><circle cx="1166.4" cy="641.4" r="3.300" fill="#8cc152"/><circle cx="1173.6" cy="633.8" r="3.300" fill="#8cc152"/><circle cx="1180.8" cy="628.1" r="3.300" fill="#8cc152"/><circle cx="1188.0" cy="620.2" r="3.300" fill="#8cc152"/><circle cx="1195.2" cy="625.3" r="3.300" fill="#8cc152"/><path d="M792.0 800.3L799.2 800.3L806.4 800.3L813.6 800.3L820.8 800.3L828.0 800.3L835.2 800.3L842.4 800.3L849.6 800.3L856.8 800.3L864.0 800.3L871.2 800.3L878.4 800.3L885.6 800.3L892.8 800.3L900.0 800.3L907.2 800.3L914.4 800.3L921.6 800.3L928.8 800.3L936.0 800.3L943.2 800.3L950.4 800.3L957.6 800.3L964.8 800.3L972.0 800.3L979.2 800.3L986.4 800.3L993.6 800.3L1000.8 800.3L1008.0 800.3L1015.2 800.3L1022.4 800.3L1029.6 800.3L1036.8 800.3L1044.0 800.3L1051.2 800.3L1058.4 800.3L1065.6 800.3L1072.8 800.3L1080.0 800.3L1087.2 800.3L1094.4 800.3L1101.6 800.3L1108.8 800.3L1116.0 800.3L1123.2 800.3L1130.4 800.3L1137.6 800.3L1144.8 800.3L1152.0 800.3L1159.2 800.3L1166.4 800.3L1173.6 800.3L1180.8 800.3L1188.0 800.3L1195.2 800.3" fill="none" stroke="#a0619a" stroke-width="1.800" stroke-linejoin="round"/><circle cx="792.0" cy="800.3" r="3.300" fill="#a0619a"/><circle cx="799.2" cy="800.3" r="3.300" fill="#a0619a"/><circle cx="806.4" cy="800.3" r="3.300" fill="#a0619a"/><circle cx="813.6" cy="800.3" r="3.300" fill="#a0619a"/><circle cx="820.8" cy="800.3" r="3.300" fill="#a0619a"/><circle cx="828.0" cy="800.3" r="3.300" fill="#a0619a"/><circle cx="835.2" cy="800.3" r="3.300" fill="#a0619a"/><circle cx="842.4" cy="800.3" r="3.300" fill="#a0619a"/><circle cx="849.6" cy="800.3" r="3.300" fill="#a0619a"/><circle cx="856.8" cy="800.3" r="3.300" fill="#a0619a"/><circle cx="864.0" cy="800.3" r="3.300" fill="#a0619a"/><circle cx="871.2" cy="800.3" r="3.300" fill="#a0619a"/><circle cx="878.4" cy="800.3" r="3.300" fill="#a0619a"/><circle cx="885.6" cy="800.3" r="3.300" fill="#a0619a"/><circle cx="892.8" cy="800.3" r="3.300" fill="#a0619a"/><circle cx="900.0" cy="800.3" r="3.300" fill="#a0619a"/><circle cx="907.2" cy="800.3" r="3.300" fill="#a0619a"/><circle cx="914.4" cy="800.3" r="3.300" fill="#a0619a"/><circle cx="921.6" cy="800.3" r="3.300" fill="#a0619a"/><circle cx="928.8" cy="800.3" r="3.300" fill="#a0619a"/><circle cx="936.0" cy="800.3" r="3.300" fill="#a0619a"/><circle cx="943.2" cy="800.3" r="3.300" fill="#a0619a"/><circle cx="950.4" cy="800.3" r="3.300" fill="#a0619a"/><circle cx="957.6" cy="800.3" r="3.300" fill="#a0619a"/><circle cx="964.8" cy="800.3" r="3.300" fill="#a0619a"/><circle cx="972.0" cy="800.3" r="3.300" fill="#a0619a"/><circle cx="979.2" cy="800.3" r="3.300" fill="#a0619a"/><circle cx="986.4" cy="800.3" r="3.300" fill="#a0619a"/><circle cx="993.6" cy="800.3" r="3.300" fill="#a0619a"/><circle cx="1000.8" cy="800.3" r="3.300" fill="#a0619a"/><circle cx="1008.0" cy="800.3" r="3.300" fill="#a0619a"/><circle cx="1015.2" cy="800.3" r="3.300" fill="#a0619a"/><circle cx="1022.4" cy="800.3" r="3.300" fill="#a0619a"/><circle cx="1029.6" cy="800.3" r="3.300" fill="#a0619a"/><circle cx="1036.8" cy="800.3" r="3.300" fill="#a0619a"/><circle cx="1044.0" cy="800.3" r="3.300" fill="#a0619a"/><circle cx="1051.2" cy="800.3" r="3.300" fill="#a0619a"/><circle cx="1058.4" cy="800.3" r="3.300" fill="#a0619a"/><circle cx="1065.6" cy="800.3" r="3.300" fill="#a0619a"/><circle cx="1072.8" cy="800.3" r="3.300" fill="#a0619a"/><circle cx="1080.0" cy="800.3" r="3.300" fill="#a0619a"/><circle cx="1087.2" cy="800.3" r="3.300" fill="#a0619a"/><circle cx="1094.4" cy="800.3" r="3.300" fill="#a0619a"/><circle cx="1101.6" cy="800.3" r="3.300" fill="#a0619a"/><circle cx="1108.8" cy="800.3" r="3.300" fill="#a0619a"/><circle cx="1116.0" cy="800.3" r="3.300" fill="#a0619a"/><circle cx="1123.2" cy="800.3" r="3.300" fill="#a0619a"/><circle cx="1130.4" cy="800.3" r="3.300" fill="#a0619a"/><circle cx="1137.6" cy="800.3" r="3.300" fill="#a0619a"/><circle cx="1144.8" cy="800.3" r="3.300" fill="#a0619a"/><circle cx="1152.0" cy="800.3" r="3.300" fill="#a0619a"/><circle cx="1159.2" cy="800.3" r="3.300" fill="#a0619a"/><circle cx="1166.4" cy="800.3" r="3.300" fill="#a0619a"/><circle cx="1173.6" cy="800.3" r="3.300" fill="#a0619a"/><circle cx="1180.8" cy="800.3" r="3.300" fill="#a0619a"/><circle cx="1188.0" cy="800.3" r="3.300" fill="#a0619a"/><circle cx="1195.2" cy="800.3" r="3.300" fill="#a0619a"/></svg>
<div class="lg" style="left:739.5px;top:850.2px;background:#545b62"></div>
<div class="cb" style="left:743.8px;top:854.2px"></div>
<svg class="ico" style="left:744.8px;top:855.0px" width="8" height="8" viewBox="0 0 8 8"><path d="M1 4l2.200 2.300L7 1.200" fill="none" stroke="#222" stroke-width="1.800"/></svg>
<div class="t lgt" style="left:758.8px;top:859.4000000000001px;">Visits</div>
<div class="lg" style="left:842.2px;top:850.2px;background:#3855a6"></div>
<div class="cb" style="left:846.5px;top:854.2px"></div>
<svg class="ico" style="left:847.5px;top:855.0px" width="8" height="8" viewBox="0 0 8 8"><path d="M1 4l2.200 2.300L7 1.200" fill="none" stroke="#222" stroke-width="1.800"/></svg>
<div class="t lgt" style="left:861.5px;top:859.4000000000001px;">Clicks</div>
<div class="lg" style="left:945.9px;top:850.2px;background:#54b8e6"></div>
<div class="cb" style="left:950.1999999999999px;top:854.2px"></div>
<svg class="ico" style="left:951.1999999999999px;top:855.0px" width="8" height="8" viewBox="0 0 8 8"><path d="M1 4l2.200 2.300L7 1.200" fill="none" stroke="#222" stroke-width="1.800"/></svg>
<div class="t lgt" style="left:965.1999999999999px;top:859.4000000000001px;">Conversions</div>
<div class="lg" style="left:1048.8px;top:850.2px;background:#f79a3a"></div>
<div class="cb" style="left:1053.1px;top:854.2px"></div>
<svg class="ico" style="left:1054.1px;top:855.0px" width="8" height="8" viewBox="0 0 8 8"><path d="M1 4l2.200 2.300L7 1.200" fill="none" stroke="#222" stroke-width="1.800"/></svg>
<div class="t lgt" style="left:1068.1px;top:859.4000000000001px;">Revenue</div>
<div class="lg" style="left:1151.6px;top:850.2px;background:#c0574a"></div>
<div class="cb" style="left:1155.8999999999999px;top:854.2px"></div>
<svg class="ico" style="left:1156.8999999999999px;top:855.0px" width="8" height="8" viewBox="0 0 8 8"><path d="M1 4l2.200 2.300L7 1.200" fill="none" stroke="#222" stroke-width="1.800"/></svg>
<div class="t lgt" style="left:1170.8999999999999px;top:859.4000000000001px;">Cost</div>
<div class="lg" style="left:1254.8px;top:850.2px;background:#8cc252"></div>
<div class="cb" style="left:1259.1px;top:854.2px"></div>
<svg class="ico" style="left:1260.1px;top:855.0px" width="8" height="8" viewBox="0 0 8 8"><path d="M1 4l2.200 2.300L7 1.200" fill="none" stroke="#222" stroke-width="1.800"/></svg>
<div class="t lgt" style="left:1274.1px;top:859.4000000000001px;">Profit</div>
<div class="lg" style="left:739.5px;top:875.2px;background:#a2629b"></div>
<div class="cb" style="left:743.8px;top:879.2px"></div>
<svg class="ico" style="left:744.8px;top:880.0px" width="8" height="8" viewBox="0 0 8 8"><path d="M1 4l2.200 2.300L7 1.200" fill="none" stroke="#222" stroke-width="1.800"/></svg>
<div class="t lgt" style="left:758.8px;top:884.4000000000001px;">Impressions</div>
</body></html>
